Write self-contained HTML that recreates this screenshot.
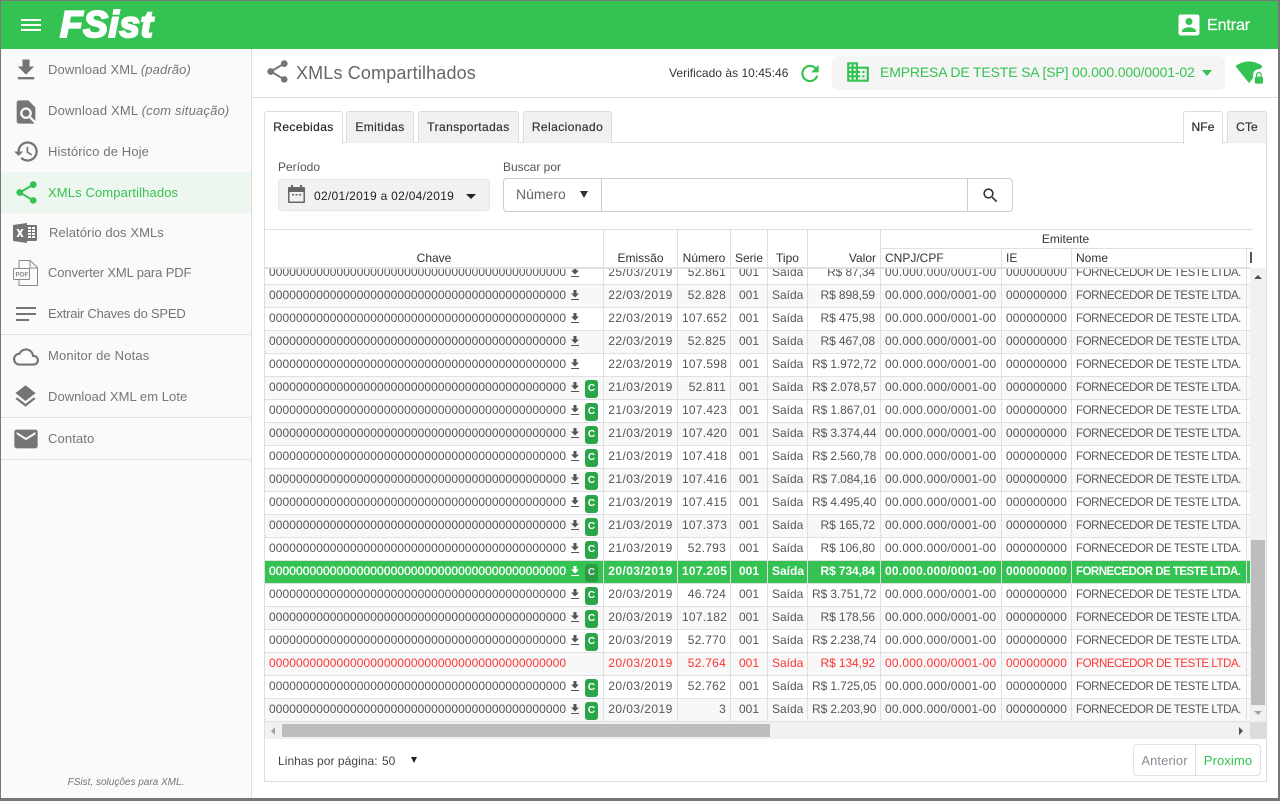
<!DOCTYPE html>
<html><head><meta charset="utf-8"><title>FSist</title>
<style>
*{box-sizing:border-box}
html,body{margin:0;padding:0;width:1280px;height:801px;overflow:hidden;background:#777;font-family:"Liberation Sans",sans-serif}
#w{position:absolute;left:1px;top:1px;width:1277px;height:797px;background:#fff;overflow:hidden}
.a{position:absolute;white-space:nowrap}
#root{position:absolute;left:0;top:0;width:1280px;height:801px}
.top{left:1px;top:1px;width:1277px;height:48px;background:#34c352}
.side{left:1px;top:49px;width:251px;height:749px;background:#fafafa;border-right:1px solid #e0e0e0}
.m{font-size:13px;color:#757575;left:48px;line-height:16px;letter-spacing:.12px}
.ic{position:absolute;fill:#757575}
.sep{left:1px;width:250px;height:1px;background:#e2e2e2}
.tab{top:111px;height:32px;border:1px solid #ddd;border-bottom:0;background:#f1f1f1;border-radius:3px 3px 0 0;font-size:12px;color:#333;line-height:30px;text-align:center;letter-spacing:.42px;-webkit-text-stroke:.2px #333}
.tab.on{background:#fff;height:33px;z-index:3;color:#222}
.panel{left:264px;top:142px;width:1003px;height:640px;border:1px solid #ddd}
.th{font-size:12px;color:#333;line-height:14px}
.vl{width:1px;background:#e0e0e0}
.hl{height:1px;background:#e0e0e0}
#tb{left:265px;top:268px;width:985px;height:454px;overflow:hidden}
table{position:absolute;top:-6px;left:0;border-collapse:separate;border-spacing:0;table-layout:fixed;width:1032px;font-size:12px;color:#555}
td{height:23px;padding:0 4px;border-right:1px solid #e0e0e0;border-bottom:1px solid #e0e0e0;white-space:nowrap;overflow:hidden;line-height:20px;vertical-align:top}
tr:nth-child(even) td{background:#f8f8f8}
td.c1{padding-left:4px;letter-spacing:.08px;position:relative}
td.c{text-align:center}
td.r{text-align:right}
td:nth-child(2){letter-spacing:.45px}
td:nth-child(3){letter-spacing:.25px}
td:nth-child(6){letter-spacing:-.1px;padding-right:5px}
td:nth-child(7){text-align:left;letter-spacing:.22px}
td:nth-child(8){letter-spacing:.1px}
td:nth-child(9){font-size:11.5px;letter-spacing:-.44px;line-height:22px}
tr.sel td{background:#34c352!important;color:#fff;font-weight:bold;border-right-color:#e0e0e0}
tr.sel td:nth-child(9){letter-spacing:-.52px}
tr.sel td.c1{letter-spacing:.08px;font-weight:normal;-webkit-text-stroke:.35px #fff}
tr.red td{color:#f33}
.dl{position:absolute;left:305px;top:4px;width:10px;height:12px;fill:#555}
.sel .dl{fill:#fff}
.bd{position:absolute;left:320px;top:3px;width:13px;height:18px;background:#2aa549;border-radius:3px;color:#fff;font-weight:bold;font-size:10px;line-height:18px;text-align:center;letter-spacing:0}
.sel .bd{background:#2b9c46;color:#e8e8e8;-webkit-text-stroke:0}
</style></head><body>
<div id="w"></div>
<div id="root">
<div class="a top"></div>
<svg class="ic" style="left:18px;top:13px;fill:#fff" width="26" height="24" viewBox="0 0 24 24"><path d="M2 18h20v-2H2v2zm0-5h20v-2H2v2zm0-7v2h20V6H2z"/></svg>
<div class="a" style="left:60px;top:4px;font-size:37px;line-height:42px;font-weight:bold;font-style:italic;color:#fff;-webkit-text-stroke:2px #fff;letter-spacing:.6px">FSist</div>

<div class="a side"></div>
<div class="a" style="left:1px;top:172px;width:250px;height:41px;background:#edf7f0"></div>
<svg class="ic" style="left:12px;top:56px" width="28" height="28" viewBox="0 0 24 24"><path d="M19 9h-4V3H9v6H5l7 7 7-7zM5 18v2h14v-2H5z"/></svg>
<div class="a m" style="top:62px">Download XML <i>(padrão)</i></div>
<svg class="ic" style="left:12px;top:98px" width="28" height="28" viewBox="0 0 24 24"><path d="M20 19.590V8l-6-6H6c-1.100 0-1.990.9-1.990 2L4 20c0 1.100.89 2 1.990 2H18c.45 0 .85-.15 1.190-.4l-4.430-4.430c-.8.52-1.740.83-2.760.83-2.760 0-5-2.240-5-5s2.240-5 5-5 5 2.240 5 5c0 1.020-.31 1.960-.83 2.750L20 19.590zM9 13c0 1.660 1.340 3 3 3s3-1.340 3-3-1.340-3-3-3-3 1.340-3 3z"/></svg>
<div class="a m" style="top:103px;letter-spacing:.18px">Download XML <i>(com situação)</i></div>
<svg class="ic" style="left:13px;top:138px" width="27" height="27" viewBox="0 0 24 24"><path d="M13 3c-4.970 0-9 4.030-9 9H1l3.890 3.890.07.14L9 12H6c0-3.870 3.130-7 7-7s7 3.130 7 7-3.130 7-7 7c-1.930 0-3.680-.79-4.940-2.060l-1.420 1.420C8.270 19.990 10.510 21 13 21c4.970 0 9-4.030 9-9s-4.030-9-9-9zm-1 5v5l4.280 2.540.72-1.210-3.500-2.080V8H12z"/></svg>
<div class="a m" style="top:144px">Histórico de Hoje</div>
<svg class="ic" style="left:13px;top:179px;fill:#34c352" width="27" height="27" viewBox="0 0 24 24"><path d="M18 16.080c-.76 0-1.440.3-1.960.77L8.910 12.700c.05-.23.09-.46.09-.7s-.04-.47-.09-.7l7.050-4.110c.54.5 1.250.81 2.040.81 1.660 0 3-1.340 3-3s-1.340-3-3-3-3 1.340-3 3c0 .24.04.47.09.7L8.040 9.810C7.500 9.310 6.790 9 6 9c-1.660 0-3 1.340-3 3s1.340 3 3 3c.79 0 1.500-.31 2.040-.81l7.120 4.160c-.05.21-.08.43-.08.65 0 1.610 1.310 2.920 2.920 2.920 1.610 0 2.920-1.310 2.920-2.920s-1.310-2.920-2.920-2.920z"/></svg>
<div class="a m" style="top:185px;color:#34c352">XMLs Compartilhados</div>
<svg class="ic" style="left:13px;top:221px" width="25" height="24" viewBox="0 0 25 24"><path d="M14 2v2h9c.6 0 1 .4 1 1v14c0 .6-.4 1-1 1h-9v2L0 20V4z"/><path fill="#fff" d="M3.500 8h2.300l1.200 2.500L8.300 8h2.200l-2.200 4 2.300 4H8.300L7 13.500 5.700 16H3.500l2.300-4zM15 6h3v2h-3zM19 6h3v2h-3zM15 9h3v2h-3zM19 9h3v2h-3zM15 12h3v2h-3zM19 12h3v2h-3zM15 15h3v2h-3zM19 15h3v2h-3z"/></svg>
<div class="a m" style="top:225px;left:49px;letter-spacing:.08px">Relatório dos XMLs</div>
<svg class="ic" style="left:13px;top:259px" width="26" height="28" viewBox="0 0 26 28"><path fill="none" stroke="#8a8a8a" d="M6 9V1.500h11l7.500 7v18H6V21"/><path fill="none" stroke="#8a8a8a" d="M17 1.500V9h7.500"/><rect x=".5" y="9.500" width="16" height="11" rx="1" fill="#fafafa" stroke="#8a8a8a"/><text x="2.500" y="17.500" font-size="6.500" font-weight="bold" fill="#8a8a8a" font-family="Liberation Sans">PDF</text></svg>
<div class="a m" style="top:265px;letter-spacing:-.13px">Converter XML para PDF</div>
<svg class="ic" style="left:16px;top:307px" width="20" height="15" viewBox="0 0 20 15"><rect width="20" height="2" y="0"/><rect width="20" height="2" y="6"/><rect width="13" height="2" y="12"/></svg>
<div class="a m" style="top:306px;letter-spacing:-.22px">Extrair Chaves do SPED</div>
<div class="a sep" style="top:334px"></div>
<svg class="ic" style="left:13px;top:344px" width="26" height="26" viewBox="0 0 24 24"><path d="M19.350 10.040C18.670 6.590 15.640 4 12 4c-2.890 0-5.400 1.640-6.650 4.040C2.340 8.360 0 10.910 0 14c0 3.310 2.690 6 6 6h13c2.760 0 5-2.240 5-5 0-2.640-2.050-4.780-4.650-4.960zM19 18H6c-2.210 0-4-1.790-4-4 0-2.050 1.530-3.760 3.560-3.970l1.070-.11.5-.95C8.080 7.140 9.940 6 12 6c2.620 0 4.880 1.860 5.390 4.430l.3 1.500 1.530.11c1.560.1 2.780 1.410 2.780 2.960 0 1.650-1.350 3-3 3z"/></svg>
<div class="a m" style="top:348px;letter-spacing:.15px">Monitor de Notas</div>
<svg class="ic" style="left:12px;top:383px" width="27" height="27" viewBox="0 0 24 24"><path d="M11.990 18.540l-7.370-5.730L3 14.070l9 7 9-7-1.630-1.270-7.380 5.740zM12 16l7.360-5.730L21 9l-9-7-9 7 1.630 1.270L12 16z"/></svg>
<div class="a m" style="top:389px;letter-spacing:.05px">Download XML em Lote</div>
<div class="a sep" style="top:417px"></div>
<svg class="ic" style="left:11px;top:425px" width="30" height="28" viewBox="0 0 24 24"><path d="M20 4H4c-1.100 0-1.990.9-1.990 2L2 18c0 1.100.9 2 2 2h16c1.100 0 2-.9 2-2V6c0-1.100-.9-2-2-2zm0 4l-8 5-8-5V6l8 5 8-5v2z"/></svg>
<div class="a m" style="top:431px">Contato</div>
<div class="a sep" style="top:459px"></div>
<div class="a" style="left:1px;width:250px;top:777px;text-align:center;font-size:10px;font-style:italic;color:#757575;line-height:12px">FSist, soluções para XML.</div>

<svg class="ic" style="left:1175px;top:11px;fill:#fff" width="28" height="28" viewBox="0 0 24 24"><path d="M3 5v14c0 1.100.89 2 2 2h14c1.100 0 2-.9 2-2V5c0-1.100-.9-2-2-2H5c-1.110 0-2 .9-2 2zm12 4c0 1.660-1.340 3-3 3s-3-1.340-3-3 1.340-3 3-3 3 1.340 3 3zm-9 8c0-2 4-3.100 6-3.100s6 1.100 6 3.100v1H6v-1z"/></svg>
<div class="a" style="left:1207px;top:16px;font-size:16px;line-height:20px;color:#fff;letter-spacing:-.1px;-webkit-text-stroke:.2px #fff">Entrar</div>

<svg class="ic" style="left:264px;top:58px" width="27" height="27" viewBox="0 0 24 24"><path d="M18 16.080c-.76 0-1.440.3-1.960.77L8.910 12.700c.05-.23.09-.46.09-.7s-.04-.47-.09-.7l7.050-4.110c.54.5 1.250.81 2.040.81 1.660 0 3-1.340 3-3s-1.340-3-3-3-3 1.340-3 3c0 .24.04.47.09.7L8.040 9.810C7.500 9.310 6.790 9 6 9c-1.660 0-3 1.340-3 3s1.340 3 3 3c.79 0 1.500-.31 2.040-.81l7.120 4.160c-.05.21-.08.43-.08.65 0 1.610 1.310 2.920 2.920 2.920 1.610 0 2.920-1.310 2.920-2.920s-1.310-2.920-2.920-2.920z"/></svg>
<div class="a" style="left:296px;top:62px;font-size:18px;line-height:22px;color:#666;letter-spacing:.15px">XMLs Compartilhados</div>
<div class="a" style="left:669px;top:65px;font-size:12px;line-height:16px;color:#333;letter-spacing:.03px">Verificado às 10:45:46</div>
<svg class="ic" style="left:797px;top:60px;fill:#34c352" width="26" height="27" viewBox="0 0 24 24"><path d="M17.650 6.350C16.200 4.900 14.210 4 12 4c-4.420 0-7.990 3.580-7.990 8s3.570 8 7.990 8c3.730 0 6.840-2.550 7.730-6h-2.080c-.82 2.330-3.040 4-5.650 4-3.310 0-6-2.690-6-6s2.690-6 6-6c1.660 0 3.140.69 4.220 1.780L13 11h7V4l-2.350 2.350z"/></svg>
<div class="a" style="left:832px;top:56px;width:393px;height:34px;background:#f5f5f5;border-radius:6px"></div>
<svg class="ic" style="left:844px;top:59px;fill:#34c352" width="28" height="26" viewBox="0 0 24 24"><path d="M12 7V3H2v18h20V7H12zM6 19H4v-2h2v2zm0-4H4v-2h2v2zm0-4H4V9h2v2zm0-4H4V5h2v2zm4 12H8v-2h2v2zm0-4H8v-2h2v2zm0-4H8V9h2v2zm0-4H8V5h2v2zm10 12h-8v-2h2v-2h-2v-2h2v-2h-2V9h8v10zm-2-8h-2v2h2v-2zm0 4h-2v2h2v-2z"/></svg>
<div class="a" style="left:880px;top:64px;font-size:14px;line-height:16px;color:#34c352;letter-spacing:-.15px">EMPRESA DE TESTE SA [SP] 00.000.000/0001-02</div>
<div class="a" style="left:1202px;top:70px;width:0;height:0;border:5px solid transparent;border-top:6px solid #34c352;border-bottom:0"></div>
<svg class="ic" style="left:1235px;top:58px;fill:#34c352" width="28" height="28" viewBox="0 0 24 24"><path d="M23 16v-1.500c0-1.400-1.100-2.500-2.500-2.500S18 13.100 18 14.500V16c-.5 0-1 .5-1 1v4c0 .5.5 1 1 1h5c.5 0 1-.5 1-1v-4c0-.5-.5-1-1-1zm-1 0h-3v-1.500c0-.8.7-1.500 1.500-1.500s1.500.7 1.500 1.500V16zm-6.500-1.500c0-2.800 2.200-5 5-5 .4 0 .7 0 1 .1L23.600 7c-.4-.3-4.900-4-11.600-4C5.300 3 .8 6.700.4 7L12 21.500l3.500-4.400v-2.600z"/></svg>
<div class="a hl" style="left:252px;top:97px;width:1026px"></div>

<div class="a panel"></div>
<div class="a tab on" style="left:264px;width:79px">Recebidas</div>
<div class="a tab" style="left:346px;width:68px">Emitidas</div>
<div class="a tab" style="left:418px;width:101px">Transportadas</div>
<div class="a tab" style="left:523px;width:89px">Relacionado</div>
<div class="a tab on" style="left:1183px;width:40px;letter-spacing:.1px">NFe</div>
<div class="a tab" style="left:1227px;width:40px;letter-spacing:.1px">CTe</div>

<div class="a" style="left:278px;top:160px;font-size:12px;line-height:15px;color:#555">Período</div>
<div class="a" style="left:278px;top:179px;width:212px;height:32px;background:#f1f1f1;border:1px solid #e4e4e4;border-radius:3px"></div>
<svg class="ic" style="left:288px;top:185px;fill:#666" width="17" height="19" viewBox="0 0 17 19"><path d="M3 0h2v2h7V0h2v2h2c.6 0 1 .4 1 1v14c0 .6-.4 1-1 1H1c-.6 0-1-.4-1-1V3c0-.6.4-1 1-1h2zM1.500 7v9.500h14V7zM4 9h2v1.500H4zM7.500 9h2v1.500h-2zM11 9h2v1.500h-2z"/></svg>
<div class="a" style="left:314px;top:188px;font-size:12px;line-height:16px;color:#222;letter-spacing:.29px">02/01/2019 a 02/04/2019</div>
<div class="a" style="left:466px;top:194px;width:0;height:0;border:5px solid transparent;border-top:5px solid #222;border-bottom:0"></div>

<div class="a" style="left:503px;top:160px;font-size:12px;line-height:15px;color:#555">Buscar por</div>
<div class="a" style="left:503px;top:178px;width:510px;height:34px;background:#fff;border:1px solid #ccc;border-radius:4px"></div>
<div class="a vl" style="left:601px;top:178px;height:34px;background:#ccc"></div>
<div class="a vl" style="left:967px;top:178px;height:34px;background:#ccc"></div>
<div class="a" style="left:516px;top:186px;font-size:14px;line-height:17px;color:#666;letter-spacing:0">Número</div>
<div class="a" style="left:580px;top:191px;width:0;height:0;border:4px solid transparent;border-top:7px solid #333;border-bottom:0"></div>
<svg class="ic" style="left:981px;top:186px;fill:#333" width="19" height="19" viewBox="0 0 24 24"><path d="M15.500 14h-.79l-.28-.27C15.410 12.590 16 11.110 16 9.500 16 5.910 13.090 3 9.500 3S3 5.910 3 9.500 5.910 16 9.500 16c1.610 0 3.090-.59 4.230-1.570l.27.28v.79l5 4.990L20.490 19l-4.990-5zm-6 0C7.010 14 5 11.990 5 9.500S7.010 5 9.500 5 14 7.010 14 9.500 11.990 14 9.500 14z"/></svg>

<div class="a hl" style="left:265px;top:229px;width:988px"></div>
<div class="a hl" style="left:881px;top:248px;width:372px"></div>
<div class="a vl" style="left:603px;top:230px;height:38px"></div>
<div class="a vl" style="left:677px;top:230px;height:38px"></div>
<div class="a vl" style="left:730px;top:230px;height:38px"></div>
<div class="a vl" style="left:767px;top:230px;height:38px"></div>
<div class="a vl" style="left:807px;top:230px;height:38px"></div>
<div class="a vl" style="left:880px;top:230px;height:38px"></div>
<div class="a vl" style="left:1001px;top:248px;height:20px"></div>
<div class="a vl" style="left:1071px;top:248px;height:20px"></div>
<div class="a vl" style="left:1246px;top:248px;height:20px"></div>
<div class="a th" style="left:265px;width:338px;top:251px;text-align:center">Chave</div>
<div class="a th" style="left:604px;width:73px;top:251px;text-align:center">Emissão</div>
<div class="a th" style="left:678px;width:52px;top:251px;text-align:center">Número</div>
<div class="a th" style="left:731px;width:36px;top:251px;text-align:center">Serie</div>
<div class="a th" style="left:768px;width:39px;top:251px;text-align:center">Tipo</div>
<div class="a th" style="left:808px;width:68px;top:251px;text-align:right">Valor</div>
<div class="a th" style="left:881px;width:369px;top:232px;text-align:center">Emitente</div>
<div class="a th" style="left:885px;top:251px">CNPJ/CPF</div>
<div class="a th" style="left:1006px;top:251px">IE</div>
<div class="a th" style="left:1076px;top:251px">Nome</div>
<div class="a" style="left:1250px;top:252px;width:2px;height:11px;background:#555"></div>

<div class="a" id="tb">
<table>
<colgroup><col style="width:339px"><col style="width:74px"><col style="width:53px"><col style="width:37px"><col style="width:40px"><col style="width:73px"><col style="width:121px"><col style="width:70px"><col style="width:175px"><col style="width:50px"></colgroup>
<tbody>
<tr><td class="c1">00000000000000000000000000000000000000000000<svg class="dl" viewBox="0 0 10 12"><path d="M9 4.500H6.500V1h-3v3.500H1L5 8.500zM1 10h8v1H1z"/></svg></td><td class="c">25/03/2019</td><td class="r">52.861</td><td class="c">001</td><td class="c">Saída</td><td class="r">R$ 87,34</td><td>00.000.000/0001-00</td><td>000000000</td><td>FORNECEDOR DE TESTE LTDA.</td><td></td></tr>
<tr><td class="c1">00000000000000000000000000000000000000000000<svg class="dl" viewBox="0 0 10 12"><path d="M9 4.500H6.500V1h-3v3.500H1L5 8.500zM1 10h8v1H1z"/></svg></td><td class="c">22/03/2019</td><td class="r">52.828</td><td class="c">001</td><td class="c">Saída</td><td class="r">R$ 898,59</td><td>00.000.000/0001-00</td><td>000000000</td><td>FORNECEDOR DE TESTE LTDA.</td><td></td></tr>
<tr><td class="c1">00000000000000000000000000000000000000000000<svg class="dl" viewBox="0 0 10 12"><path d="M9 4.500H6.500V1h-3v3.500H1L5 8.500zM1 10h8v1H1z"/></svg></td><td class="c">22/03/2019</td><td class="r">107.652</td><td class="c">001</td><td class="c">Saída</td><td class="r">R$ 475,98</td><td>00.000.000/0001-00</td><td>000000000</td><td>FORNECEDOR DE TESTE LTDA.</td><td></td></tr>
<tr><td class="c1">00000000000000000000000000000000000000000000<svg class="dl" viewBox="0 0 10 12"><path d="M9 4.500H6.500V1h-3v3.500H1L5 8.500zM1 10h8v1H1z"/></svg></td><td class="c">22/03/2019</td><td class="r">52.825</td><td class="c">001</td><td class="c">Saída</td><td class="r">R$ 467,08</td><td>00.000.000/0001-00</td><td>000000000</td><td>FORNECEDOR DE TESTE LTDA.</td><td></td></tr>
<tr><td class="c1">00000000000000000000000000000000000000000000<svg class="dl" viewBox="0 0 10 12"><path d="M9 4.500H6.500V1h-3v3.500H1L5 8.500zM1 10h8v1H1z"/></svg></td><td class="c">22/03/2019</td><td class="r">107.598</td><td class="c">001</td><td class="c">Saída</td><td class="r">R$ 1.972,72</td><td>00.000.000/0001-00</td><td>000000000</td><td>FORNECEDOR DE TESTE LTDA.</td><td></td></tr>
<tr><td class="c1">00000000000000000000000000000000000000000000<svg class="dl" viewBox="0 0 10 12"><path d="M9 4.500H6.500V1h-3v3.500H1L5 8.500zM1 10h8v1H1z"/></svg><span class="bd">C</span></td><td class="c">21/03/2019</td><td class="r">52.811</td><td class="c">001</td><td class="c">Saída</td><td class="r">R$ 2.078,57</td><td>00.000.000/0001-00</td><td>000000000</td><td>FORNECEDOR DE TESTE LTDA.</td><td></td></tr>
<tr><td class="c1">00000000000000000000000000000000000000000000<svg class="dl" viewBox="0 0 10 12"><path d="M9 4.500H6.500V1h-3v3.500H1L5 8.500zM1 10h8v1H1z"/></svg><span class="bd">C</span></td><td class="c">21/03/2019</td><td class="r">107.423</td><td class="c">001</td><td class="c">Saída</td><td class="r">R$ 1.867,01</td><td>00.000.000/0001-00</td><td>000000000</td><td>FORNECEDOR DE TESTE LTDA.</td><td></td></tr>
<tr><td class="c1">00000000000000000000000000000000000000000000<svg class="dl" viewBox="0 0 10 12"><path d="M9 4.500H6.500V1h-3v3.500H1L5 8.500zM1 10h8v1H1z"/></svg><span class="bd">C</span></td><td class="c">21/03/2019</td><td class="r">107.420</td><td class="c">001</td><td class="c">Saída</td><td class="r">R$ 3.374,44</td><td>00.000.000/0001-00</td><td>000000000</td><td>FORNECEDOR DE TESTE LTDA.</td><td></td></tr>
<tr><td class="c1">00000000000000000000000000000000000000000000<svg class="dl" viewBox="0 0 10 12"><path d="M9 4.500H6.500V1h-3v3.500H1L5 8.500zM1 10h8v1H1z"/></svg><span class="bd">C</span></td><td class="c">21/03/2019</td><td class="r">107.418</td><td class="c">001</td><td class="c">Saída</td><td class="r">R$ 2.560,78</td><td>00.000.000/0001-00</td><td>000000000</td><td>FORNECEDOR DE TESTE LTDA.</td><td></td></tr>
<tr><td class="c1">00000000000000000000000000000000000000000000<svg class="dl" viewBox="0 0 10 12"><path d="M9 4.500H6.500V1h-3v3.500H1L5 8.500zM1 10h8v1H1z"/></svg><span class="bd">C</span></td><td class="c">21/03/2019</td><td class="r">107.416</td><td class="c">001</td><td class="c">Saída</td><td class="r">R$ 7.084,16</td><td>00.000.000/0001-00</td><td>000000000</td><td>FORNECEDOR DE TESTE LTDA.</td><td></td></tr>
<tr><td class="c1">00000000000000000000000000000000000000000000<svg class="dl" viewBox="0 0 10 12"><path d="M9 4.500H6.500V1h-3v3.500H1L5 8.500zM1 10h8v1H1z"/></svg><span class="bd">C</span></td><td class="c">21/03/2019</td><td class="r">107.415</td><td class="c">001</td><td class="c">Saída</td><td class="r">R$ 4.495,40</td><td>00.000.000/0001-00</td><td>000000000</td><td>FORNECEDOR DE TESTE LTDA.</td><td></td></tr>
<tr><td class="c1">00000000000000000000000000000000000000000000<svg class="dl" viewBox="0 0 10 12"><path d="M9 4.500H6.500V1h-3v3.500H1L5 8.500zM1 10h8v1H1z"/></svg><span class="bd">C</span></td><td class="c">21/03/2019</td><td class="r">107.373</td><td class="c">001</td><td class="c">Saída</td><td class="r">R$ 165,72</td><td>00.000.000/0001-00</td><td>000000000</td><td>FORNECEDOR DE TESTE LTDA.</td><td></td></tr>
<tr><td class="c1">00000000000000000000000000000000000000000000<svg class="dl" viewBox="0 0 10 12"><path d="M9 4.500H6.500V1h-3v3.500H1L5 8.500zM1 10h8v1H1z"/></svg><span class="bd">C</span></td><td class="c">21/03/2019</td><td class="r">52.793</td><td class="c">001</td><td class="c">Saída</td><td class="r">R$ 106,80</td><td>00.000.000/0001-00</td><td>000000000</td><td>FORNECEDOR DE TESTE LTDA.</td><td></td></tr>
<tr class="sel"><td class="c1">00000000000000000000000000000000000000000000<svg class="dl" viewBox="0 0 10 12"><path d="M9 4.500H6.500V1h-3v3.500H1L5 8.500zM1 10h8v1H1z"/></svg><span class="bd">C</span></td><td class="c">20/03/2019</td><td class="r">107.205</td><td class="c">001</td><td class="c">Saída</td><td class="r">R$ 734,84</td><td>00.000.000/0001-00</td><td>000000000</td><td>FORNECEDOR DE TESTE LTDA.</td><td></td></tr>
<tr><td class="c1">00000000000000000000000000000000000000000000<svg class="dl" viewBox="0 0 10 12"><path d="M9 4.500H6.500V1h-3v3.500H1L5 8.500zM1 10h8v1H1z"/></svg><span class="bd">C</span></td><td class="c">20/03/2019</td><td class="r">46.724</td><td class="c">001</td><td class="c">Saída</td><td class="r">R$ 3.751,72</td><td>00.000.000/0001-00</td><td>000000000</td><td>FORNECEDOR DE TESTE LTDA.</td><td></td></tr>
<tr><td class="c1">00000000000000000000000000000000000000000000<svg class="dl" viewBox="0 0 10 12"><path d="M9 4.500H6.500V1h-3v3.500H1L5 8.500zM1 10h8v1H1z"/></svg><span class="bd">C</span></td><td class="c">20/03/2019</td><td class="r">107.182</td><td class="c">001</td><td class="c">Saída</td><td class="r">R$ 178,56</td><td>00.000.000/0001-00</td><td>000000000</td><td>FORNECEDOR DE TESTE LTDA.</td><td></td></tr>
<tr><td class="c1">00000000000000000000000000000000000000000000<svg class="dl" viewBox="0 0 10 12"><path d="M9 4.500H6.500V1h-3v3.500H1L5 8.500zM1 10h8v1H1z"/></svg><span class="bd">C</span></td><td class="c">20/03/2019</td><td class="r">52.770</td><td class="c">001</td><td class="c">Saída</td><td class="r">R$ 2.238,74</td><td>00.000.000/0001-00</td><td>000000000</td><td>FORNECEDOR DE TESTE LTDA.</td><td></td></tr>
<tr class="red"><td class="c1">00000000000000000000000000000000000000000000</td><td class="c">20/03/2019</td><td class="r">52.764</td><td class="c">001</td><td class="c">Saída</td><td class="r">R$ 134,92</td><td>00.000.000/0001-00</td><td>000000000</td><td>FORNECEDOR DE TESTE LTDA.</td><td></td></tr>
<tr><td class="c1">00000000000000000000000000000000000000000000<svg class="dl" viewBox="0 0 10 12"><path d="M9 4.500H6.500V1h-3v3.500H1L5 8.500zM1 10h8v1H1z"/></svg><span class="bd">C</span></td><td class="c">20/03/2019</td><td class="r">52.762</td><td class="c">001</td><td class="c">Saída</td><td class="r">R$ 1.725,05</td><td>00.000.000/0001-00</td><td>000000000</td><td>FORNECEDOR DE TESTE LTDA.</td><td></td></tr>
<tr><td class="c1">00000000000000000000000000000000000000000000<svg class="dl" viewBox="0 0 10 12"><path d="M9 4.500H6.500V1h-3v3.500H1L5 8.500zM1 10h8v1H1z"/></svg><span class="bd">C</span></td><td class="c">20/03/2019</td><td class="r">3</td><td class="c">001</td><td class="c">Saída</td><td class="r">R$ 2.203,90</td><td>00.000.000/0001-00</td><td>000000000</td><td>FORNECEDOR DE TESTE LTDA.</td><td></td></tr>
</tbody></table>
</div>
<div class="a" style="left:265px;top:267px;width:985px;height:2px;background:#e0e0e0"></div>

<div class="a" style="left:1250px;top:268px;width:16px;height:454px;background:#f1f1f1"></div>
<div class="a" style="left:1251px;top:540px;width:14px;height:165px;background:#bdbdbd"></div>
<div class="a" style="left:1254px;top:275px;width:0;height:0;border:4px solid transparent;border-bottom:4px solid #505050;border-top:0"></div>
<div class="a" style="left:1254px;top:711px;width:0;height:0;border:4px solid transparent;border-top:4px solid #a3a3a3;border-bottom:0"></div>
<div class="a" style="left:265px;top:722px;width:985px;height:17px;background:#f1f1f1"></div>
<div class="a" style="left:1250px;top:722px;width:16px;height:17px;background:#dcdcdc"></div>
<div class="a" style="left:282px;top:724px;width:488px;height:13px;background:#bdbdbd"></div>
<div class="a" style="left:271px;top:727px;width:0;height:0;border:4px solid transparent;border-right:4px solid #a3a3a3;border-left:0"></div>
<div class="a" style="left:1239px;top:727px;width:0;height:0;border:4px solid transparent;border-left:4px solid #505050;border-right:0"></div>

<div class="a" style="left:278px;top:754px;font-size:12px;line-height:15px;color:#444;letter-spacing:.05px">Linhas por página:</div>
<div class="a" style="left:382px;top:754px;font-size:12px;line-height:15px;color:#444">50</div>
<div class="a" style="left:411px;top:757px;width:0;height:0;border:3.500px solid transparent;border-top:6px solid #222;border-bottom:0"></div>
<div class="a" style="left:1133px;top:744px;width:128px;height:32px;border:1px solid #dee2e6;border-radius:4px"></div>
<div class="a vl" style="left:1195px;top:744px;height:32px;background:#dee2e6"></div>
<div class="a" style="left:1134px;width:61px;top:753px;text-align:center;font-size:13px;line-height:15px;color:#868e96;letter-spacing:.1px">Anterior</div>
<div class="a" style="left:1196px;width:64px;top:753px;text-align:center;font-size:13px;line-height:15px;color:#34c352;letter-spacing:.1px">Proximo</div>
</div>
</body></html>
